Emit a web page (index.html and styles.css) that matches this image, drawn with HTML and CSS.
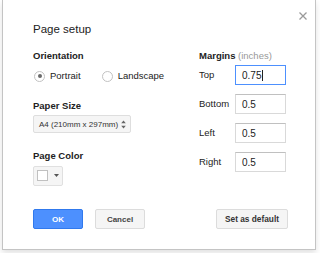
FILE: index.html
```html
<!DOCTYPE html>
<html>
<head>
<meta charset="utf-8">
<link rel="stylesheet" href="styles.css">
</head>
<body>
<div class="dialog">
  <div class="header">
    <div class="title">Page setup</div>
    <svg class="close" width="8" height="8" viewBox="0 0 8 8"><path d="M0.5 0.5L7.5 7.5M7.5 0.5L0.5 7.5" stroke="#9a9a9a" stroke-width="1.3" fill="none"/></svg>
  </div>
  <div class="body">
    <div class="left">
      <div class="label first">Orientation</div>
      <div class="radios">
        <span class="radio checked"></span><span class="rtext">Portrait</span>
        <span class="radio second"></span><span class="rtext">Landscape</span>
      </div>
      <div class="label paper">Paper Size</div>
      <div class="select">
        <span>A4 (210mm x 297mm)</span>
        <svg width="5" height="9" viewBox="0 0 5 9"><path d="M2.5 0.5L4.8 3.2H0.2Z M2.5 8.5L4.8 5.8H0.2Z" fill="#666"/></svg>
      </div>
      <div class="label pcolor">Page Color</div>
      <div class="colorbtn">
        <span class="swatch"></span>
        <svg width="5" height="3" viewBox="0 0 5 3"><path d="M0 0H5L2.5 3Z" fill="#555"/></svg>
      </div>
    </div>
    <div class="right">
      <div class="label first">Margins <span class="unit">(inches)</span></div>
      <div class="mrow">
        <span class="mlabel">Top</span>
        <div class="minput focus"><span>0.75</span><span class="caret"></span></div>
      </div>
      <div class="mrow">
        <span class="mlabel">Bottom</span>
        <div class="minput"><span>0.5</span></div>
      </div>
      <div class="mrow">
        <span class="mlabel">Left</span>
        <div class="minput"><span>0.5</span></div>
      </div>
      <div class="mrow">
        <span class="mlabel">Right</span>
        <div class="minput"><span>0.5</span></div>
      </div>
    </div>
  </div>
  <div class="footer">
    <div class="btngroup">
      <div class="btn primary">OK</div>
      <div class="btn">Cancel</div>
    </div>
    <div class="btn wide">Set as default</div>
  </div>
</div>
</body>
</html>
```
FILE: styles.css
```css
html, body {
  margin: 0;
  padding: 0;
  background: #ffffff;
}
body {
  font-family: "Liberation Sans", Arial, sans-serif;
  color: #222;
  overflow: hidden;
  width: 320px;
  height: 253px;
}
.dialog {
  box-sizing: border-box;
  margin-left: 2px;
  width: 314px;
  height: 250px;
  background: #fff;
  border: 1px solid #c4c4c4;
  border-top: none;
  box-shadow: 0 3px 6px rgba(0,0,0,0.12);
  padding: 22px 0 0 30px;
}
.header {
  display: flex;
  justify-content: space-between;
  align-items: flex-start;
  height: 14px;
  margin-right: 8px;
}
.title {
  font-size: 11.5px;
  line-height: 14px;
  color: #222;
}
.close {
  margin-top: -10px;
  display: block;
}
.body {
  display: flex;
}
.left {
  width: 166px;
}
.label {
  font-size: 9.5px;
  line-height: 12px;
  font-weight: bold;
  color: #222;
  height: 12px;
}
.label.first { margin-top: 13.5px; }
.label.paper { margin-top: 17.5px; }
.label.pcolor { margin-top: 16.5px; }
.unit {
  font-weight: normal;
  color: #999;
}
.radios {
  display: flex;
  align-items: center;
  height: 12px;
  margin-top: 8.5px;
  font-size: 9.5px;
  line-height: 12px;
}
.radio {
  box-sizing: border-box;
  width: 11px;
  height: 11px;
  border: 1px solid #c2c2c2;
  border-radius: 50%;
  background: #fff;
  display: flex;
  align-items: center;
  justify-content: center;
  margin-left: 1px;
}
.radio.second { margin-left: 21px; }
.radio.checked::after {
  content: "";
  width: 4px;
  height: 4px;
  border-radius: 50%;
  background: #6a6a6a;
}
.rtext {
  margin-left: 5px;
}
.select {
  box-sizing: border-box;
  margin-top: 3.5px;
  width: 98px;
  height: 18px;
  background: #f5f5f5;
  border: 1px solid #dedede;
  border-radius: 2px;
  display: flex;
  align-items: center;
  justify-content: space-between;
  padding: 0 4px 0 5px;
  font-size: 8px;
  color: #333;
}
.select svg { display: block; }
.colorbtn {
  box-sizing: border-box;
  margin-top: 4px;
  width: 30px;
  height: 20px;
  background: #f5f5f5;
  border: 1px solid #e0e0e0;
  border-radius: 2px;
  display: flex;
  align-items: center;
  padding-left: 3px;
}
.swatch {
  box-sizing: border-box;
  width: 11px;
  height: 11px;
  background: #fff;
  border: 1px solid #c0c0c0;
}
.colorbtn svg {
  margin-left: 6px;
  display: block;
}
.right {
  width: 100px;
}
.mrow {
  display: flex;
  align-items: center;
  height: 20px;
  margin-top: 9px;
}
.label.first + .mrow { margin-top: 3.5px; }
.mlabel {
  width: 36px;
  font-size: 9.5px;
  line-height: 12px;
  color: #222;
}
.minput {
  box-sizing: border-box;
  width: 51px;
  height: 20px;
  border: 1px solid #d9d9d9;
  border-top-color: #c0c0c0;
  background: #fff;
  display: flex;
  align-items: center;
  padding-left: 6px;
  font-size: 10px;
  color: #222;
}
.minput.focus {
  border: 1px solid #4d90fe;
}
.caret {
  width: 1px;
  height: 11px;
  background: #222;
  margin-left: 1px;
}
.footer {
  display: flex;
  justify-content: space-between;
  width: 255px;
  margin-top: 23.5px;
}
.btngroup {
  display: flex;
  gap: 12px;
}
.btn {
  box-sizing: border-box;
  width: 50px;
  height: 20px;
  border: 1px solid #dcdcdc;
  border-radius: 2px;
  background: #f5f5f5;
  color: #444;
  font-size: 8px;
  font-weight: bold;
  display: flex;
  align-items: center;
  justify-content: center;
}
.btn.primary {
  background: #4d90fe;
  border-color: #3079ed;
  color: #fff;
}
.btn.wide {
  width: 72px;
  color: #333;
  font-size: 8.3px;
}
```
